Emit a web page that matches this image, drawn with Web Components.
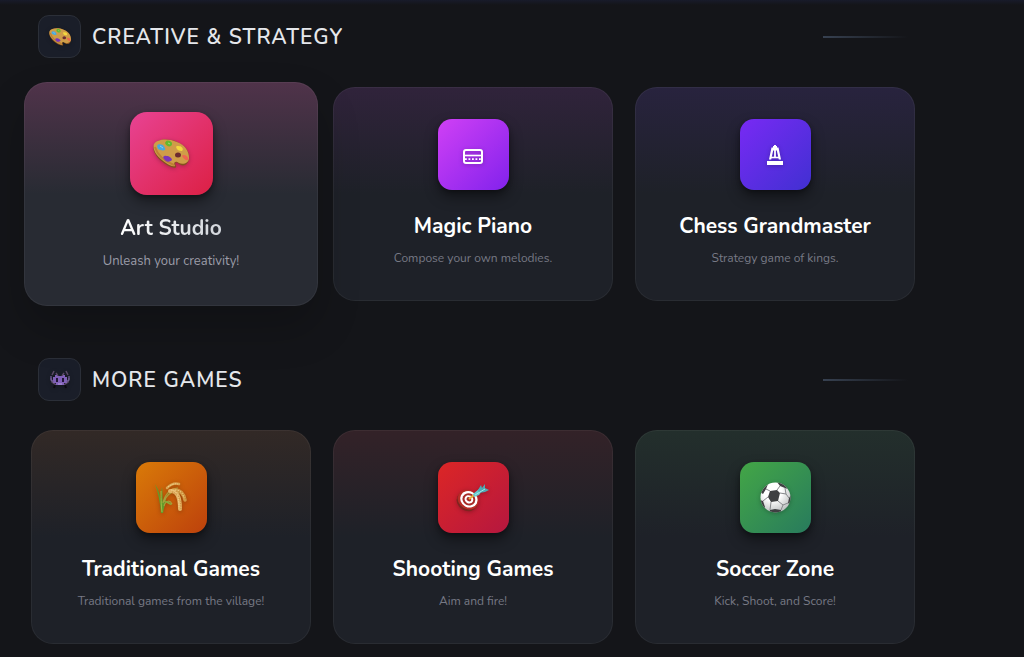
<!DOCTYPE html>
<html lang="en">
<head>
<meta charset="utf-8">
<meta name="viewport" content="width=device-width, initial-scale=1">
<title>Games</title>
<style>
  body {
    margin: 0;
    min-height: 100vh;
    background: linear-gradient(#181b2a, #141519 5px) #141519;
    color: #fff;
    font-family: Nunito, Lato, "Open Sans", sans-serif;
  }
</style>
</head>
<body>
<game-page>
  <game-section heading="Creative &amp; Strategy">
    <game-icon slot="icon" name="palette" width="22"></game-icon>
    <game-card heading="Art Studio" active style="--tint: #50334a; --from: #e84393; --to: #dc2044">
      <game-icon slot="icon" name="palette" width="36"></game-icon>
      Unleash your creativity!
    </game-card>
    <game-card heading="Magic Piano" style="--tint: #30233b; --from: #d040f5; --to: #8222ec">
      <game-icon slot="icon" name="piano" width="20"></game-icon>
      Compose your own melodies.
    </game-card>
    <game-card heading="Chess Grandmaster" style="--tint: #28233e; --from: #782af4; --to: #4130d2">
      <game-icon slot="icon" name="chess" width="16"></game-icon>
      Strategy game of kings.
    </game-card>
  </game-section>
  <game-section heading="More Games">
    <game-icon slot="icon" name="alien" width="20"></game-icon>
    <game-card heading="Traditional Games" style="--tint: #322926; --from: #d97a08; --to: #bd410c">
      <game-icon slot="icon" name="rice" width="32"></game-icon>
      Traditional games from the village!
    </game-card>
    <game-card heading="Shooting Games" style="--tint: #332228; --from: #dc2626; --to: #b5173f">
      <game-icon slot="icon" name="target" width="32"></game-icon>
      Aim and fire!
    </game-card>
    <game-card heading="Soccer Zone" style="--tint: #232f2c; --from: #43a646; --to: #287b5d">
      <game-icon slot="icon" name="ball" width="31"></game-icon>
      Kick, Shoot, and Score!
    </game-card>
  </game-section>
</game-page>

<script>
const icons = {
  palette: {
    box: '0 0 36 29',
    body: `
      <path d="M1 6C4 0 15-1 24 3c8 3 13 10 12 17-1 6-6 8-10 5-3-3-5-1-3 2 1 2-2 2-5 1C8 24-2 14 1 6z" fill="#85511f"/>
      <path d="M1 5C4 0 15-1 24 3c8 3 12 9 12 16 0 5-6 7-10 5-4-3-6 0-4 3-2 1-6-1-9-3C4 18-1 11 1 5z" fill="#cf9d48"/>
      <path d="M2 8c2 7 9 14 19 18" fill="none" stroke="#bd8134" stroke-width="2"/>
      <ellipse cx="25" cy="16" rx="3" ry="2.5" fill="#6c2b30"/>
      <path d="M4 7c2-3 4-1 6-1 1 2 3 3 2 5-2 1-5 0-7-1z" fill="#47a9df"/>
      <path d="M12 4c1-3 3-3 5-2 2 1 3 3 1 5-2 1-5 0-6-3z" fill="#64b82e"/>
      <path d="M23 8c1-2 3 0 4-1 2 1 4 3 2 5-3 0-5-1-6-4z" fill="#f3d93e"/>
      <path d="M29 17c1-2 2 0 3-1 2 1 4 3 3 5-2 1-4-1-6-4z" fill="#ee6650"/>
      <path d="M10 18c2-2 3-1 5-1 2 1 4 2 4 4-3 3-7 2-9-3z" fill="#7a35b8"/>
      <path d="M7 7l3 2M15 4l2 1" stroke="#fff" stroke-opacity=".4"/>`
  },
  piano: {
    box: '0 0 20 19',
    body: `
      <rect x="1" y="5" width="18" height="13" rx="2" fill="none" stroke="#fff" stroke-width="2"/>
      <path d="M1 10.5h18" stroke="#fff" stroke-width="1.6"/>
      <path d="M2 14.2h16" stroke="#fff" stroke-width="1.8" stroke-dasharray="1.8 1.7"/>`
  },
  chess: {
    box: '0 0 16 20',
    body: `
      <path d="M8 0v4M6 2h4" stroke="#fff" stroke-width="2"/>
      <path d="M4.5 2.500h7L14 14.500h-2.200l-2-9H6.200l-2 9H2z" fill="#fff"/>
      <path d="M8 5v7" stroke="#fff" stroke-width="1.8"/>
      <path d="M4 12.500h8" stroke="#fff" stroke-width="1.6"/>
      <path d="M0 16h16v4H0z" fill="#fff"/>`
  },
  alien: {
    box: '0 0 20 18',
    body: `
      <path d="M2 4L4 0M18 4l-2-4M1 7l1 4 4 3M19 7l-1 4-4 3M6 2l2 3M14 2l-2 3" fill="none" stroke="#5c4a68" stroke-width="1.500"/>
      <path d="M5 14l-1 3M15 14l1 3" stroke="#0b0a10" stroke-width="2"/>
      <path d="M5 4h2v1h6V4h2v2h2v6h-3v2H6v-2H3V6h2z" fill="#8060b8"/>
      <path d="M1 5v4l3 2M19 5v4l-3 2" fill="none" stroke="#75609b" stroke-width="1.2"/>
      <path d="M6 7h2v4H6zM12 7h2v4h-2z" fill="#211735"/>
      <path d="M8 13h4" stroke="#b49bdc"/>`
  },
  rice: {
    box: '0 0 32 32',
    body: `
      <path d="M6 31C5 20 3 10 0 2c4 6 6 14 6 20C6 15 6 9 7 5c1 6 0 10 1 15l3-5c0 6-2 10-3 16z" fill="#629b2b"/>
      <path d="M7 30C6 22 6 14 6 9" fill="none" stroke="#a1bb42"/>
      <path d="M8 21c2-9 6-14 15-15M9 20c3-8 8-12 16-9M9 24c2-6 6-6 8-2" fill="none" stroke="#a7a03c" stroke-width="1.2"/>
      <path d="M10 19c3 0 5 1 7 4-3 0-4-2-7-3z" fill="#8bab38"/>
      <path d="M12 6Q18 0 24 2" fill="none" stroke="#d9a350" stroke-width="2.5" stroke-linecap="round"/>
      <path d="M18 8Q28 7 30 18" fill="none" stroke="#d39a45" stroke-width="3.5" stroke-linecap="round"/>
      <path d="M15 9Q25 8 25 27" fill="none" stroke="#e3b264" stroke-width="4" stroke-linecap="round"/>
      <path d="M13 5Q18 1 23 2M16 8Q24 8 24 25M20 8Q27 8 29 16" fill="none" stroke="#f6d794" stroke-dasharray="1.5 1"/>
      <path d="M17 10Q26 12 26 27M21 9Q29 10 31 18" fill="none" stroke="#b97c2c" stroke-width=".8" stroke-dasharray="1 1.5"/>`
  },
  target: {
    box: '0 0 32 27',
    body: `
      <g transform="rotate(28 11 16)">
        <ellipse cx="11" cy="17.5" rx="11" ry="9.5" fill="#7e251f"/>
        <ellipse cx="11" cy="15.5" rx="11" ry="9.5" fill="#b82c26"/>
        <ellipse cx="11.5" cy="15" rx="9" ry="8" fill="#fff"/>
        <ellipse cx="11.5" cy="15" rx="6.5" ry="6" fill="#a92c28"/>
        <ellipse cx="11.5" cy="15" rx="4.5" ry="4" fill="#fff"/>
        <ellipse cx="11.5" cy="15" rx="2.5" ry="2" fill="#a92c28"/>
      </g>
      <path d="M12 15l5-4" stroke="#e8b13d" stroke-width="2"/>
      <path d="M16 10l6-5 3 2-3 4-5 2z" fill="#67c7cd"/>
      <path d="M21 6l3-5 1 3 3-4v4l4 2-4 2-6 1z" fill="#4eaab5"/>
      <path d="M18 11l10-6" stroke="#a5e9e7"/>`
  },
  ball: {
    box: '0 0 31 31',
    body: `
      <defs>
        <radialGradient id="shine" cx=".4" cy=".3" r=".75"><stop offset=".4" stop-color="#fff"/><stop offset="1" stop-color="#b7babb"/></radialGradient>
        <clipPath id="round"><circle cx="15.5" cy="15.5" r="15"/></clipPath>
      </defs>
      <circle cx="15.5" cy="15.5" r="15" fill="url(#shine)"/>
      <g clip-path="url(#round)">
        <path d="M10 9l7-1 3 3-2 8-7 1-3-5zM17 0h7l4 7-3-1-5-2zM0 10l4-7 4-1-2 5-3 5zM31 13l-2 3-1 5 3 2zM10 28l5-1 6 1v3H9zM0 18l3 1 2 6-1 3-4-3z" fill="#3f4042"/>
        <path d="M10 9L6 7M17 8l3-4M20 11l6 1 3 4M18 19l5 4 5-2M11 20l-1 8M8 15l-5 4M23 23l-2 5M26 12l-1-6" fill="none" stroke="#85878a"/>
      </g>`
  }
};

class GameIcon extends HTMLElement {
  constructor() {
    super();
    this.attachShadow({ mode: 'open' });
  }

  connectedCallback() {
    const icon = icons[this.getAttribute('name')];
    this.shadowRoot.innerHTML = `
      <style>
        :host { display: block; line-height: 0; }
        svg { filter: drop-shadow(0 1px 2px rgba(0, 0, 0, .25)); overflow: visible; }
      </style>
      <svg viewBox="${icon.box}" width="${this.getAttribute('width')}" aria-hidden="true">${icon.body}</svg>`;
  }
}

const cardTemplate = document.createElement('template');
cardTemplate.innerHTML = `
  <style>
    :host {
      display: block;
      --base: #1e2128;
      --tile: 71px;
    }
    a {
      display: flex;
      flex-direction: column;
      align-items: center;
      box-sizing: border-box;
      height: 100%;
      padding: 31px 16px 32px;
      border: 1px solid rgba(255, 255, 255, .05);
      border-radius: 22px;
      background: linear-gradient(var(--tint), var(--base) 50%) border-box;
      color: inherit;
      text-align: center;
      text-decoration: none;
    }
    .tile {
      display: grid;
      place-items: center;
      width: var(--tile);
      height: var(--tile);
      border-radius: 14px;
      background: linear-gradient(135deg, var(--from), var(--to));
      box-shadow: 0 7px 14px rgba(0, 0, 0, .4), 0 2px 4px rgba(0, 0, 0, .3);
    }
    h3 {
      margin: 22px 0 8px;
      font-size: 21px;
      line-height: 28px;
      font-weight: 700;
    }
    p {
      margin: 0;
      color: #777985;
      font-size: 12px;
      line-height: 20px;
    }

    /* the raised card grows past its grid cell */
    :host([active]) {
      position: relative;
      margin: -5px -7px;
      --base: #282b33;
      --tile: 83px;
    }
    :host([active]) a {
      padding-top: 29px;
      border-radius: 23px;
      box-shadow: 0 22px 44px rgba(0, 0, 0, .2);
    }
    :host([active]) .tile { border-radius: 17px; }
    :host([active]) h3 {
      margin-top: 19px;
      margin-bottom: 9px;
      background: linear-gradient(90deg, #fff, #d1d5db);
      background-clip: text;
      -webkit-background-clip: text;
      color: transparent;
    }
    :host([active]) p {
      color: #9b9ca8;
      font-size: 13px;
    }
  </style>
  <a href="#">
    <div class="tile"><slot name="icon"></slot></div>
    <h3></h3>
    <p><slot></slot></p>
  </a>
`;

class GameCard extends HTMLElement {
  constructor() {
    super();
    this.attachShadow({ mode: 'open' });
    this.shadowRoot.appendChild(cardTemplate.content.cloneNode(true));
  }

  connectedCallback() {
    this.shadowRoot.querySelector('h3').textContent = this.getAttribute('heading');
  }
}

const sectionTemplate = document.createElement('template');
sectionTemplate.innerHTML = `
  <style>
    :host { display: block; }
    header {
      display: flex;
      align-items: center;
      gap: 11px;
      margin-bottom: 29px;
      padding: 0 7px;
    }
    .badge {
      display: grid;
      place-items: center;
      box-sizing: border-box;
      width: 43px;
      height: 43px;
      border: 1px solid #2b2f38;
      border-radius: 11px;
      background: #1a1e29;
    }
    h2 {
      flex: 1;
      margin: 0;
      color: #e5e7eb;
      font-size: 21px;
      line-height: 28px;
      font-weight: 600;
      letter-spacing: 1px;
      text-transform: uppercase;
    }
    .line {
      width: 85px;
      height: 2px;
      background: linear-gradient(90deg, #374151, transparent);
    }
    .cards {
      display: grid;
      grid-template-columns: repeat(3, minmax(0, 1fr));
      gap: 22px;
    }
  </style>
  <section>
    <header>
      <div class="badge"><slot name="icon"></slot></div>
      <h2></h2>
      <div class="line"></div>
    </header>
    <div class="cards"><slot></slot></div>
  </section>
`;

class GameSection extends HTMLElement {
  constructor() {
    super();
    this.attachShadow({ mode: 'open' });
    this.shadowRoot.appendChild(sectionTemplate.content.cloneNode(true));
  }

  connectedCallback() {
    this.shadowRoot.querySelector('h2').textContent = this.getAttribute('heading');
  }
}

class GamePage extends HTMLElement {
  constructor() {
    super();
    this.attachShadow({ mode: 'open' });
    this.shadowRoot.innerHTML = `
      <style>
        :host { display: block; }
        main {
          display: flex;
          flex-direction: column;
          gap: 57px;
          padding: 15px 109px 14px 31px;
        }
      </style>
      <main><slot></slot></main>`;
  }
}

window.customElements.define('game-icon', GameIcon);
window.customElements.define('game-card', GameCard);
window.customElements.define('game-section', GameSection);
window.customElements.define('game-page', GamePage);
</script>
</body>
</html>
